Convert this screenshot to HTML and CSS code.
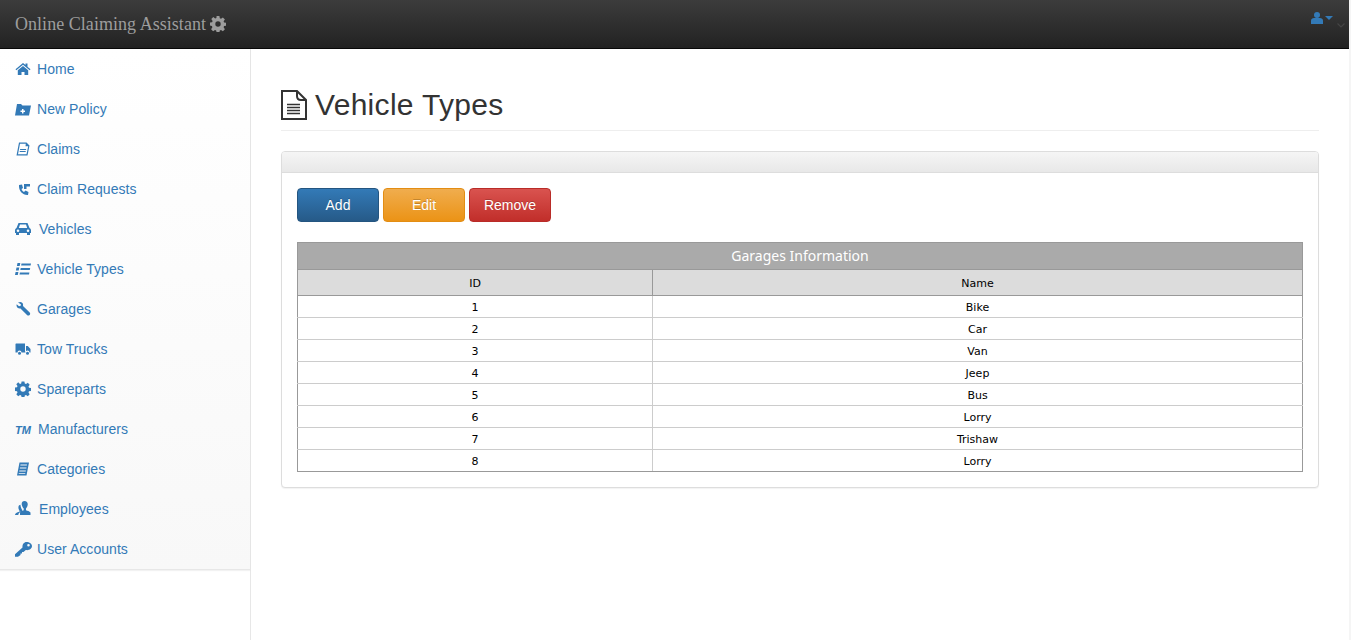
FILE: index.html
```html
<!DOCTYPE html>
<html lang="en">

<head>
    <meta charset="UTF-8">
    <meta name="viewport" content="width=device-width, initial-scale=1.0">
    <title>Vehicle Types</title>
    <link rel="stylesheet" href="styles.css">
</head>

<body>
    <div class="page">
        <nav class="navbar">
            <a class="brand" href="#">Online Claiming Assistant
                <svg class="brand-icon" viewBox="0 0 16 16"><path fill-rule="evenodd" d="M6.600 0h2.800l.4 2.200 1.200.5 1.900-1.300 2 2-1.300 1.900.5 1.200 2.200.4v2.800l-2.200.4-.5 1.200 1.300 1.900-2 2-1.900-1.300-1.200.5-.4 2.200H6.600l-.4-2.200-1.200-.5-1.900 1.300-2-2 1.300-1.900-.5-1.200L-.1 9.400V6.600l2.200-.4.5-1.200-1.300-1.900 2-2 1.900 1.300 1.200-.5zM8 5.300a2.700 2.700 0 1 0 0 5.400 2.700 2.700 0 0 0 0-5.400z"/></svg>
            </a>
            <div class="user-menu">
                <svg class="user-icon" viewBox="0 0 12 12"><circle cx="6" cy="3" r="3"/><path d="M0 12V8.500C0 7 1.500 6 3 6h6c1.500 0 3 1 3 2.500V12z"/></svg>
                <span class="caret"></span>
                <svg class="chevron" viewBox="0 0 8 5"><path d="M.5.500 4 4 7.500.5" fill="none" stroke="#444" stroke-width="1.200"/></svg>
            </div>
        </nav>

        <div class="layout">
            <aside class="sidebar">
                <ul class="side-menu">
                    <li><a href="#"><svg class="icon" viewBox="0 0 16 16"><path d="M8 2 .5 8.300l.8 1L8 3.700l6.700 5.600.8-1L12.500 5.800V2.500h-2v1.600zM8 5 2.800 9.300V14h3.700v-3h3v3h3.700V9.300z"/></svg>Home</a></li>
                    <li><a href="#"><svg class="icon" viewBox="0 0 16 16"><path fill-rule="evenodd" d="M2 3h4l1.500 1.500H16L14 14.500H0zM7 8v1.500H5.500v1.500H7v1.500h1.500V11H10V9.500H8.500V8z"/></svg>New Policy</a></li>
                    <li><a href="#"><svg class="icon" viewBox="0 0 16 16"><path fill-rule="evenodd" d="M4 1.500h7.500l3 3L12.500 14.500H1.500zM5 2.700 3 13.300h8.500l1.700-8H10.500l.3-2.600zM5.200 8h6l-.2 1H5zM4.800 10h6l-.2 1h-6z"/></svg>Claims</a></li>
                    <li><a href="#"><svg class="icon" viewBox="0 0 16 16"><path d="M4 4l3-.5L8 7 6.500 8c.5 1.500 1.500 2.500 2.500 3l1.500-1.500 3 1.500-.5 3C8 14.500 3.500 10 4 4zM9 3h6v2.500h-3.500V8H9z"/></svg>Claim Requests</a></li>
                    <li class="wide"><a href="#"><svg class="icon" viewBox="0 0 16 16"><path fill-rule="evenodd" d="M3.500 2h9l2 5c1 .5 1.500 1.300 1.500 2.500V12h-1v2h-3v-2H4v2H1v-2H0V9.500C0 8.300.5 7.500 1.500 7zM5 3.500 3.800 7h8.400L11 3.500zM3 8.500a1.300 1.300 0 1 0 0 2.600 1.300 1.300 0 0 0 0-2.600zM13 8.500a1.300 1.300 0 1 0 0 2.600 1.300 1.300 0 0 0 0-2.600z"/></svg>Vehicles</a></li>
                    <li><a href="#"><svg class="icon" viewBox="0 0 16 16"><path d="M2.500 2h2.800l-.6 3H1.900zM6.500 2.400H16l-.4 2H6.100zM1.500 6.500h2.800l-.6 3H.9zM5.700 7H15.200l-.4 2H5.300zM.6 11h2.800l-.6 3H0zM4.900 11.500h9.500l-.4 2H4.500z"/></svg>Vehicle Types</a></li>
                    <li><a href="#"><svg class="icon" viewBox="0 0 16 16"><path d="M3 1.500 5.500 1C7.500 1.300 8.500 3 8 5l6.700 6.500c.7.800.6 1.900-.1 2.600-.8.700-1.900.7-2.600-.1L5.500 7.500C3.500 8 1.700 6.500 1.500 4.500L1.700 3.300 4 5.300 5.700 4.700l.2-1.500z"/></svg>Garages</a></li>
                    <li><a href="#"><svg class="icon" viewBox="0 0 16 16"><path d="M1 2.500h9v9H6.500a2 2 0 0 0-4 0H.5V3zM11 5h1.800L15.500 8v3.500h-1a2 2 0 0 0-4 0H11z"/><circle cx="4.500" cy="12.200" r="1.500"/><circle cx="12.500" cy="12.200" r="1.500"/></svg>Tow Trucks</a></li>
                    <li><a href="#"><svg class="icon" viewBox="0 0 16 16"><path fill-rule="evenodd" d="M6.600.5h2.800l.4 2 1.200.5 1.800-1.200 1.900 1.900-1.200 1.800.5 1.200 2 .4v2.800l-2 .4-.5 1.200 1.200 1.800-1.900 1.900-1.800-1.200-1.200.5-.4 2H6.600l-.4-2-1.200-.5-1.800 1.200-1.900-1.900 1.200-1.800-.5-1.200-2-.4V6.600l2-.4.5-1.200-1.200-1.800 1.900-1.900L5 3l1.200-.5zM8 5.300a2.700 2.700 0 1 0 0 5.400 2.700 2.700 0 0 0 0-5.400z"/></svg>Spareparts</a></li>
                    <li class="mid"><a href="#"><span class="icon tm">TM</span>Manufacturers</a></li>
                    <li><a href="#"><svg class="icon" viewBox="0 0 16 16"><path fill-rule="evenodd" d="M4.500 1.500h9.500L11.500 14.500H2zM5.500 3.500l-.2 1h6.500l.2-1zM5 6.500l-.2 1h6.500l.2-1zM4.400 9.500l-.2 1h6.500l.2-1zM3.800 12l-.1.8h6.500l.1-.8z"/></svg>Categories</a></li>
                    <li class="wide"><a href="#"><svg class="icon" viewBox="0 0 16 16"><path d="M9.500 0c2.300 0 3.500 1.700 3.200 3.800-.2 1.700-1 3-1.700 3.800v1.700c1.500.5 3.500 1 4.500 2.200v2.500H5v-2.500c.8-1.200 2.300-1.700 3.700-2.200V7.600C7.700 6.500 7 5 6.700 3.500 6.500 1.500 7.500 0 9.500 0zM0 14c0-1.500 1.500-2.300 3.300-3l1-.3c.5-.2.300-.8 0-1.200C3.600 8.500 3.200 7 3.500 5.500 3.800 4.500 4.500 3.800 5.500 3.800c0 1.500.5 3.500 1.700 5.300v.8c-2 .7-3.500 1.600-4 4.100z"/></svg>Employees</a></li>
                    <li><a href="#"><svg class="icon key" viewBox="0 0 17 16"><path fill-rule="evenodd" d="M11.500 1C14.500 1 17 2.800 17 5c0 2.700-3 4.700-6.200 4L8.500 11H7v1.500H5.500V14L3 15.800H0v-2.500L7.500 6.500C7.200 3.300 9 1 11.500 1zM13.500 3a1.300 1.300 0 1 0 0 2.600 1.300 1.300 0 0 0 0-2.600z"/></svg>User Accounts</a></li>
                </ul>
            </aside>

            <main class="content">
                <h1 class="page-title">
                    <svg class="title-icon" viewBox="0 0 26 30"><path d="M1 1h15l9 9v19H1zM16 1v5c0 2.500 1.500 4 4 4h5" fill="none" stroke="#333" stroke-width="2"/><path d="M6 14.500h13M6 17.500h13M6 20.500h13M6 23.500h13" stroke="#333" stroke-width="1.300"/></svg>
                    Vehicle Types
                </h1>

                <section class="panel">
                    <div class="panel-heading"></div>
                    <div class="panel-body">
                        <div class="actions">
                            <button class="btn btn-blue">Add</button>
                            <button class="btn btn-orange">Edit</button>
                            <button class="btn btn-red">Remove</button>
                        </div>
                        <table class="grid">
                            <colgroup>
                                <col class="col-id">
                                <col>
                            </colgroup>
                            <thead>
                                <tr><th class="grid-title" colspan="2">Garages Information</th></tr>
                                <tr class="grid-head"><th>ID</th><th>Name</th></tr>
                            </thead>
                            <tbody>
                                <tr><td>1</td><td>Bike</td></tr>
                                <tr><td>2</td><td>Car</td></tr>
                                <tr><td>3</td><td>Van</td></tr>
                                <tr><td>4</td><td>Jeep</td></tr>
                                <tr><td>5</td><td>Bus</td></tr>
                                <tr><td>6</td><td>Lorry</td></tr>
                                <tr><td>7</td><td>Trishaw</td></tr>
                                <tr><td>8</td><td>Lorry</td></tr>
                            </tbody>
                        </table>
                    </div>
                </section>
            </main>
        </div>
    </div>
</body>

</html>
```

FILE: styles.css
```css
* {
    box-sizing: border-box;
}

html {
    background-color: #f5f5f5;
}

body {
    margin: 0;
    padding-right: 2px;
    height: 640px;
    overflow: hidden;
    font-family: "Liberation Sans", Arial, sans-serif;
    font-size: 14px;
    color: #333;
}

.page {
    height: 100%;
    background-color: white;
    display: flex;
    flex-direction: column;
}

.navbar {
    height: 49px;
    flex: none;
    display: flex;
    justify-content: space-between;
    background-image: linear-gradient(to bottom, #3c3c3c, #222);
    border-bottom: 1px solid #080808;
}

.brand {
    padding: 14px 15px;
    font-family: "Liberation Serif", "Times New Roman", serif;
    font-size: 18px;
    line-height: 20px;
    letter-spacing: 0.04px;
    color: #9d9d9d;
    text-decoration: none;
}

.brand-icon {
    width: 16px;
    height: 16px;
    margin-left: -1px;
    fill: #9d9d9d;
    vertical-align: -2px;
}

.user-menu {
    display: flex;
    align-items: flex-start;
    padding: 12px 0 0 0;
    width: 38px;
}

.user-icon {
    width: 12px;
    height: 12px;
    fill: #337ab7;
}

.caret {
    margin: 4px 0 0 2px;
    border-top: 4px solid #337ab7;
    border-left: 4px solid transparent;
    border-right: 4px solid transparent;
}

.chevron {
    width: 8px;
    height: 5px;
    margin: 11px 0 0 4px;
}

.layout {
    flex: 1;
    display: flex;
}

.sidebar {
    width: 251px;
    flex: none;
    border-right: 1px solid #e7e7e7;
}

.side-menu {
    list-style: none;
    margin: 0;
    padding: 0;
    background-image: linear-gradient(to bottom, #fff, #f8f8f8);
    border-bottom: 1px solid #e7e7e7;
    box-shadow: 0 1px 1px rgba(0, 0, 0, 0.05);
}

.side-menu a {
    height: 40px;
    display: flex;
    align-items: center;
    padding-left: 15px;
    letter-spacing: 0.05px;
    color: #337ab7;
    text-decoration: none;
}

.icon {
    width: 16px;
    height: 16px;
    flex: none;
    margin-right: 6px;
    fill: #337ab7;
}

.wide .icon {
    margin-right: 8px;
}

.mid .icon {
    margin-right: 7px;
}

.icon.key {
    width: 17px;
    margin-right: 5px;
}

.tm {
    font-size: 11px;
    font-weight: bold;
    font-style: italic;
    line-height: 18px;
    color: #337ab7;
}

.content {
    flex: 1;
    padding: 30px;
}

.page-title {
    display: flex;
    align-items: center;
    gap: 8px;
    margin: 9px 0 20px;
    padding-bottom: 9px;
    border-bottom: 1px solid #eee;
    font-size: 30px;
    font-weight: 500;
    line-height: 33px;
    letter-spacing: 0.3px;
    color: #333;
}

.title-icon {
    width: 26px;
    height: 30px;
}

.panel {
    border: 1px solid #ddd;
    border-radius: 4px;
    box-shadow: 0 1px 1px rgba(0, 0, 0, 0.05);
    background-color: white;
}

.panel-heading {
    height: 21px;
    background-image: linear-gradient(to bottom, #f5f5f5, #e8e8e8);
    border-bottom: 1px solid #ddd;
    border-radius: 3px 3px 0 0;
}

.panel-body {
    padding: 15px;
}

.actions {
    display: flex;
    gap: 4px;
    margin-bottom: 20px;
}

.btn {
    width: 82px;
    height: 34px;
    padding: 0;
    border: 1px solid;
    border-radius: 4px;
    font-family: inherit;
    font-size: 14px;
    color: white;
    text-shadow: 0 -1px 0 rgba(0, 0, 0, 0.2);
    cursor: pointer;
}

.btn-blue {
    background-image: linear-gradient(to bottom, #337ab7, #265a88);
    border-color: #245580;
}

.btn-orange {
    background-image: linear-gradient(to bottom, #f0ad4e, #eb9316);
    border-color: #e38d13;
}

.btn-red {
    background-image: linear-gradient(to bottom, #d9534f, #c12e2a);
    border-color: #b92c28;
}

.grid {
    width: 100%;
    table-layout: fixed;
    border-collapse: collapse;
    border: 1px solid #999;
    font-family: "DejaVu Sans", Tahoma, sans-serif;
    font-size: 11px;
    color: black;
}

.col-id {
    width: 355px;
}

.grid-title {
    height: 27px;
    padding-bottom: 2px;
    background-color: #aaa;
    border-bottom: 1px solid #999;
    font-family: "Noto Sans", Tahoma, sans-serif;
    font-size: 14px;
    font-weight: normal;
    color: white;
}

.grid-head th {
    height: 26px;
    padding-top: 2px;
    background-color: #dcdcdc;
    border: 1px solid #999;
    font-weight: normal;
}

.grid td {
    height: 22px;
    padding: 1px 0 0;
    text-align: center;
    border: 1px solid #ccc;
    border-left-color: #999;
}

.grid td:last-child {
    border-left-color: #ccc;
    border-right-color: #999;
}

.grid tbody tr:last-child td {
    border-bottom-color: #999;
}
```
